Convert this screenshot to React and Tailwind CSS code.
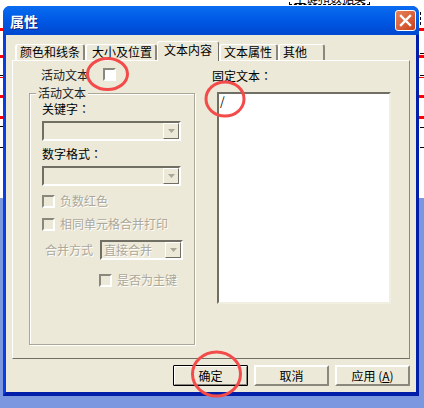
import React from 'react';

const font = { fontFamily: '"Noto Sans CJK SC", "Liberation Sans", sans-serif' };
const disabled = 'text-[#aca899] [text-shadow:1px_1px_0_#fff]';

function Arrow({ muted }) {
  return (
    <svg width="7" height="4" viewBox="0 0 7 4">
      <path d="M0 0h7L3.5 4z" fill={muted ? '#aca899' : '#716f64'} />
    </svg>
  );
}

function Combo({ className, value }) {
  return (
    <div className={`flex h-5 items-stretch border-2 border-t-[#716f64] border-l-[#716f64] border-r-white border-b-white bg-[#ece9d8] ${className}`}>
      <div className={`flex-1 pl-[2px] text-xs leading-[16px] ${disabled}`}>{value}</div>
      <div className="flex w-4 items-center justify-center border border-t-white border-l-white border-r-[#716f64] border-b-[#716f64]">
        <Arrow muted />
      </div>
    </div>
  );
}

function Check({ className }) {
  return <div className={`h-[13px] w-[13px] shrink-0 border-2 border-t-[#8a887c] border-l-[#8a887c] border-r-white border-b-white ${className || ''}`} />;
}

function Tab({ label, className, active }) {
  return (
    <div
      className={
        active
          ? `relative z-10 -mb-px flex h-[20px] items-start justify-center rounded-t-[3px] border-x border-t border-l-white border-t-white border-r-[#716f64] bg-[#ece9d8] pt-[1px] text-xs leading-[14px] text-black ${className}`
          : `flex h-[16px] items-start rounded-t-[3px] border-x-2 border-t border-l-white border-t-white border-r-[#8a887c] bg-[#ece9d8] text-xs leading-[14px] text-black ${className}`
      }
    >
      {label}
    </div>
  );
}

function Button({ children, primary, className }) {
  return (
    <button
      className={`flex h-[21px] w-[75px] items-center justify-center rounded-[1px] border-2 border-t-white border-l-white border-r-[#8a887c] border-b-[#8a887c] bg-[#ece9d8] text-xs text-black ${primary ? 'outline outline-1 -outline-offset-1 outline-black' : ''} ${className || ''}`}
    >
      {children}
    </button>
  );
}

// colon sits centred in the reference, which the TC face does
function Colon() {
  return <span className="font-['Noto_Sans_CJK_TC']">：</span>;
}

function Circles() {
  return (
    <svg className="pointer-events-none absolute left-0 top-0 z-30" width="424" height="408" viewBox="0 0 424 408" fill="none" stroke="#f34a4a" strokeWidth="3">
      <ellipse cx="107.500" cy="74" rx="20" ry="15.500" />
      <ellipse cx="225" cy="99" rx="19" ry="17" />
      <ellipse cx="216.500" cy="374" rx="24" ry="22" />
    </svg>
  );
}

function Backdrop() {
  const reds = [29, 56, 96, 117];
  return (
    <div className="absolute inset-0">
      <div className="h-[198px] bg-white" />
      <div className="h-[210px] bg-[#7b97e0]" />
      {reds.map((y) => (
        <React.Fragment key={y}>
          <div className="absolute left-0 h-[3px] w-[4px] bg-[#ff0000]" style={{ top: y - 1 }} />
          <div className="absolute left-[418px] h-[3px] w-[6px] bg-[#ff0000]" style={{ top: y - 1 }} />
        </React.Fragment>
      ))}
      <div className="absolute left-0 top-[77px] h-px w-[4px] bg-[#ff0000]" />
      <div className="absolute left-[418px] top-[77px] h-px w-[6px] bg-[#ff0000]" />
      <div className="absolute left-0 top-[75px] h-px w-[3px] bg-black" />
      <div className="absolute left-0 top-[126px] h-px w-[3px] bg-black" />
      <div className="absolute left-0 top-[147px] h-px w-[3px] bg-black" />
      <div className="absolute left-[420px] top-[53px] h-px w-[4px] bg-black" />
      <div className="absolute left-[420px] top-[75px] h-px w-[4px] bg-black" />
      <div className="absolute left-[420px] top-[127px] h-px w-[4px] bg-black" />
      <div className="absolute left-[420px] top-[147px] h-px w-[4px] bg-black" />
      <div className="absolute left-[420px] top-[12px] h-[13px] w-[4px] border-l border-dashed border-black" />
      <div className="absolute left-[289px] top-[-8px] h-[13px] w-[81px] overflow-hidden border-x border-b border-dashed border-black pl-[4px] text-xs leading-[12px] text-black">
        主键和数据类
      </div>
    </div>
  );
}

export default function App() {
  return (
    <div className="relative h-[408px] w-[424px] overflow-hidden bg-white" style={font}>
      <Backdrop />

      <div className="absolute left-[3px] top-[6px] flex h-[390px] w-[416px] flex-col overflow-hidden rounded-t-[7px] bg-[#0831d9]">
        <div className="flex h-[29px] shrink-0 items-center justify-between bg-gradient-to-b from-[#0a6cf0] via-[#0058e4] to-[#0048d0] pl-[7px] pr-[3px]">
          <span className="text-sm font-bold leading-none text-white [text-shadow:1px_1px_0_#0a1f80]">属性</span>
          <div className="flex h-[21px] w-[21px] items-center justify-center rounded-[3px] border border-white bg-gradient-to-br from-[#e8825c] to-[#c8401a]">
            <svg width="13" height="13" viewBox="0 0 13 13" stroke="#fff" strokeWidth="2.400" strokeLinecap="square">
              <path d="M2 2l9 9M11 2l-9 9" />
            </svg>
          </div>
        </div>

        <div className="flex flex-1 flex-col border-l-[3px] border-r-[3px] border-b-[4px] border-l-[#0a3ee0] border-r-[#001ea8] border-b-[#001ea8] bg-[#ece9d8] px-[6px] pt-[6px]">
          <div className="relative flex h-[19px] items-end pl-[3px]">
            <Tab label="颜色和线条" className="w-[70px] pl-[3px]" />
            <Tab label="大小及位置" className="w-[72px] pl-[5px]" />
            <Tab label="文本内容" className="w-[62px]" active />
            <Tab label="文本属性" className="w-[59px] pl-[3px]" />
            <Tab label="其他" className="w-[47px] pl-[3px]" />
          </div>

          <div className="flex h-[299px] w-[398px] border border-t-white border-l-white border-r-[#8a887c] border-b-[#716f64] pl-[16px]">
            <div className="flex w-[166px] flex-col">
              <div className="mt-[7px] flex h-[13px] items-center pl-[12px] text-xs text-[#222]">
                <span>活动文本</span>
                <Check className="ml-[14px] bg-white" />
              </div>

              <div className="relative mt-[12px] h-[252px] border border-[#aca899] shadow-[1px_1px_0_#fff,inset_1px_1px_0_#fff]">
                <span className="absolute left-[6px] top-[-8px] bg-[#ece9d8] px-[2px] text-xs leading-[14px] text-[#222]">活动文本</span>
                <div className="flex h-full flex-col pl-[12px] pt-[8px]">
                  <div className="text-xs leading-[14px] text-black">关键字<Colon /></div>
                  <Combo className="mt-[5px] w-[139px]" />
                  <div className="mt-[6px] text-xs leading-[14px] text-black">数字格式<Colon /></div>
                  <Combo className="mt-[5px] w-[139px]" />
                  <div className="mt-[8px] flex h-[14px] items-center gap-[5px] text-xs">
                    <Check />
                    <span className={disabled}>负数红色</span>
                  </div>
                  <div className="mt-[9px] flex h-[14px] items-center gap-[5px] text-xs">
                    <Check />
                    <span className={disabled}>相同单元格合并打印</span>
                  </div>
                  <div className="mt-[9px] flex h-5 items-center pl-[3px] text-xs">
                    <span className={disabled}>合并方式</span>
                    <Combo className="ml-[7px] w-[83px]" value="直接合并" />
                  </div>
                  <div className="ml-[57px] mt-[13px] flex h-[14px] items-center gap-[5px] text-xs">
                    <Check />
                    <span className={disabled}>是否为主键</span>
                  </div>
                </div>
              </div>
            </div>

            <div className="ml-[17px] flex flex-col">
              <div className="mt-[8px] text-xs leading-[14px] text-black">固定文本<Colon /></div>
              <div className="ml-[5px] mt-[9px] h-[212px] w-[174px] border-2 border-t-[#716f64] border-l-[#716f64] border-r-[#f1efe2] border-b-[#f1efe2] bg-white pl-[1px] text-xs leading-[14px] text-black">
                /
              </div>
            </div>
          </div>

          <div className="mt-[6px] flex justify-end gap-[6px]">
            <Button primary>确定</Button>
            <Button>取消</Button>
            <Button>应用 (<span className="underline">A</span>)</Button>
          </div>
        </div>
      </div>

      <Circles />
    </div>
  );
}
